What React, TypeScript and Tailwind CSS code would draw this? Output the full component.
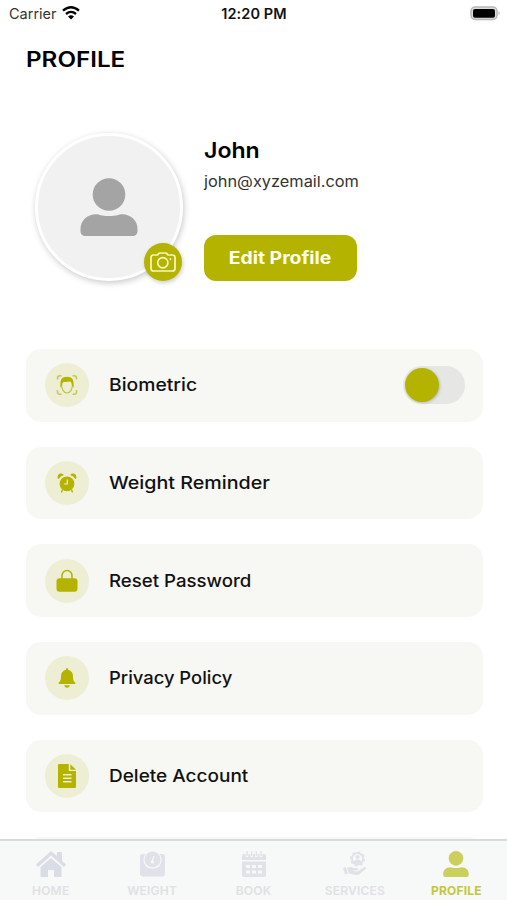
import type { ReactNode } from 'react';

const OLIVE = '#b3b300';

function Person({ className }: { className: string }) {
  return (
    <svg viewBox="0 0 58 58" className={className} fill="currentColor">
      <circle cx="29" cy="16.5" r="16.3" />
      <path d="M16 36.2c3 0 5 1.9 13 1.9s10-1.9 13-1.9c9 0 15.5 6.500 15.500 14.500v2.300c0 3-2 5-5 5h-47c-3 0-5-2-5-5v-2.300c0-8 6.500-14.500 15.500-14.500z" />
    </svg>
  );
}

function FaceIcon() {
  return (
    <svg viewBox="0 0 22 22" className="size-[22px]" fill="none">
      <path d="M1.500 5.500V4Q1.500 1.700 4 1.700H5.500M16.500 1.700H18Q20.500 1.700 20.500 4V5.500M20.500 16V18Q20.500 20.300 18 20.300H16.500M5.500 20.300H4Q1.500 20.300 1.500 18V16" stroke="#c6c65c" strokeWidth="1.500" />
      <path d="M5.300 9.500C5.300 15 8 19 11 19S16.700 15 16.700 9.500" stroke="#c2c248" strokeWidth="1.200" />
      <path d="M4.800 12C3.500 6 6 2.800 11 2.800S18.500 6 17.200 12L15.800 11.800C16 9.500 15.200 8.200 14 7.600C11 8.300 8.500 7.700 7.200 8.300C6.200 9 6.200 10.300 6.200 11.800Z" fill={OLIVE} />
      <path d="M4.700 10.500v2.800M17.300 10.500v2.800" stroke="#bebe32" strokeWidth="1.100" />
    </svg>
  );
}

function AlarmIcon() {
  return (
    <svg viewBox="0 0 22 22" className="size-[22px]" fill={OLIVE}>
      <circle cx="11" cy="11.800" r="7.400" />
      <path d="M1.700 6.200C1 3.300 3.200 1.200 5.500 1.400Q7.200 1.500 7.800 2.900Q4.300 3.800 2.700 7Q2 7 1.700 6.200ZM20.300 6.200C21 3.300 18.800 1.200 16.500 1.400Q14.800 1.500 14.200 2.900Q17.700 3.800 19.300 7Q20 7 20.300 6.200Z" />
      <path d="M6.500 17.500L5.500 20.500M15.500 17.500L16.500 20.500" stroke={OLIVE} strokeWidth="1.400" />
      <path d="M11.300 7.500V12H8" fill="none" stroke="#eeeed2" strokeWidth="1.200" />
    </svg>
  );
}

function LockIcon() {
  return (
    <svg viewBox="0 0 22 24" className="h-6 w-[22px]" fill={OLIVE}>
      <path d="M6 11V7a5 5.500 0 0 1 10 0v4" fill="none" stroke={OLIVE} strokeWidth="1.500" />
      <rect x="0.500" y="9.300" width="21" height="13.500" rx="3" />
    </svg>
  );
}

function BellIcon() {
  return (
    <svg viewBox="0 0 22 22" className="size-[22px]" fill={OLIVE}>
      <path d="M11 1Q12 1 12.200 2.700C15.500 3.500 17 6 17 9.500C17 13.500 18 14.600 19.300 15.500Q19.800 17 18.700 17H3.300Q2.200 17 2.700 15.500C4 14.600 5 13.500 5 9.500C5 6 6.500 3.500 9.800 2.700Q10 1 11 1Z" />
      <path d="M8 18.300h6Q13 20.800 11 20.800T8 18.300Z" />
    </svg>
  );
}

function DocumentIcon() {
  return (
    <svg viewBox="0 0 18 24" className="h-6 w-[18px]" fill={OLIVE}>
      <path d="M1 0H10.800V7H18V23Q18 24 17 24H1Q0 24 0 23V1Q0 0 1 0Z" />
      <path d="M12.300 0.300L18 5.800H12.300Z" />
      <path d="M5 10.800h8.500M5 14.300h8.500M5 17.800h8.500" stroke="#eeeed2" strokeWidth="1.500" />
    </svg>
  );
}

function Row({ icon, label, stretch, children }: { icon: ReactNode; label: string; stretch: string; children?: ReactNode }) {
  return (
    <div className="flex h-[72.7px] shrink-0 items-center rounded-[15px] bg-[#f7f7f3] pr-[18px] pl-[19px]">
      <div className="flex size-11 items-center justify-center rounded-full bg-[#eeeed4]">{icon}</div>
      <span className={`ml-5 origin-left whitespace-nowrap text-[17.5px] font-[460] text-[#111] ${stretch}`}>{label}</span>
      {children}
    </div>
  );
}

function Tab({ icon, label, active }: { icon: ReactNode; label: string; active?: boolean }) {
  return (
    <div className={`flex flex-1 flex-col items-center pt-[9px] ${active ? 'text-[#cccf5c]' : 'text-[#dfe2e7]'}`}>
      <div className="flex h-7 items-center justify-center">{icon}</div>
      <span className={`mt-[5px] text-[12px] leading-4 tracking-[0.2px] ${active ? 'font-bold text-[#c3c83b]' : 'font-semibold text-[#dfe1e4]'}`}>{label}</span>
    </div>
  );
}

export default function App() {
  return (
    <div className="flex h-[900px] w-[507px] flex-col overflow-hidden bg-white font-['Inter','Liberation_Sans',sans-serif] text-black">
      <header className="grid h-7 shrink-0 grid-cols-3 items-center pr-[6px] pl-[9px] text-[14.500px] leading-7">
        <div className="flex items-center gap-[5px] text-[#333]">
          <span>Carrier</span>
          <svg viewBox="0 0 18 14" className="h-[14px] w-[18px] -translate-y-px" fill="none" stroke="#000" strokeWidth="2.300">
            <path d="M1 4.700Q9-2.200 17 4.700M4 8Q9 3.800 14 8" />
            <path d="M9 13.500L6 10.500Q9 8 12 10.500Z" fill="#000" stroke="none" />
          </svg>
        </div>
        <span className="-translate-x-px text-center font-semibold tracking-[0.1px] text-[#111]">12:20 PM</span>
        <svg viewBox="0 0 31 15" className="h-[15px] w-[31px] -translate-y-px justify-self-end">
          <rect x="1" y="1" width="26" height="12.500" rx="4" fill="#ddd" stroke="#b7b7b7" strokeWidth="1.500" />
          <rect x="3" y="3" width="22" height="8.700" rx="2" />
          <path d="M28.500 5Q31 7 28.500 9.500Z" fill="#b7b7b7" />
        </svg>
      </header>
      <h1 className="mt-[17px] ml-[25.5px] h-7 w-fit shrink-0 origin-left scale-x-[1.125] text-[21.500px] leading-7 font-[560]">PROFILE</h1>

      <section className="mt-[60px] flex h-[150px] shrink-0 pl-[34.5px]">
        <div className="relative size-[148px] rounded-full border-[3px] border-white bg-[#f1f1f1] text-[#a4a4a4] shadow-[1px_2px_6px_rgba(0,0,0,0.22)]">
          <div className="flex size-full items-center justify-center">
            <Person className="size-[58px]" />
          </div>
          <div className="absolute right-[-2.500px] bottom-[-2.500px] flex size-[38px] items-center justify-center rounded-full bg-[#b3b300] shadow-[1px_2px_4px_rgba(0,0,0,0.2)]">
            <svg viewBox="0 0 26 20" className="h-5 w-[26px]" fill="none" stroke="#f8f8c0" strokeWidth="1.700">
              <path d="M3.500 3H7Q8 3 8.500 1.800Q9 1 10 1H15.500Q16.500 1 17 1.800Q17.500 3 18.500 3H22.500Q25 3 25 5.500V16.500Q25 19 22.500 19H3.500Q1 19 1 16.500V5.500Q1 3 3.500 3Z" />
              <circle cx="12.800" cy="10.800" r="5.100" />
              <circle cx="20.400" cy="7" r="0.700" fill="#f8f8d6" strokeWidth="0.700" />
            </svg>
          </div>
        </div>
        <div className="ml-[21px] flex flex-col items-start">
          <h2 className="mt-[3px] origin-left scale-x-[1.050] text-[22px] leading-7 font-semibold">John</h2>
          <p className="mt-[8px] origin-left scale-x-[1.09] text-[15px] leading-5 text-[#333]">john@xyzemail.com</p>
          <button className="mt-[43px] h-[46px] w-[153px] rounded-xl bg-[#b3b300] pt-px text-[17px] font-bold text-[#fffff0]">
            <span className="inline-block scale-x-[1.140]">Edit Profile</span>
          </button>
        </div>
      </section>

      <main className="mt-[66px] flex min-h-0 flex-1 flex-col gap-[25px] overflow-hidden pr-[24.5px] pl-[25.5px]">
        <Row icon={<FaceIcon />} label="Biometric" stretch="scale-x-[1.105]">
          <div className="ml-auto flex h-[38px] w-[62px] items-center rounded-full bg-[#e6e6e5] pl-[2px]">
            <div className="size-[34px] rounded-full bg-[#b3b300] shadow-[1px_1px_3px_rgba(0,0,0,0.2)]" />
          </div>
        </Row>
        <Row icon={<AlarmIcon />} label="Weight Reminder" stretch="scale-x-[1.125]" />
        <Row icon={<LockIcon />} label="Reset Password" stretch="scale-x-[1.065]" />
        <Row icon={<BellIcon />} label="Privacy Policy" stretch="scale-x-[1.050]" />
        <Row icon={<DocumentIcon />} label="Delete Account" stretch="scale-x-[1.085]" />
        <div className="h-[72.7px] shrink-0 rounded-[15px] bg-[#f7f7f3]" />
      </main>

      <nav className="flex h-[61px] shrink-0 border-t-2 border-[#d9d9da] bg-[#f7f8f8]">
        <Tab label="HOME" icon={
          <svg viewBox="0 0 30 26" className="h-[26px] w-[30px]" fill="#dadde5">
            <path d="M15 0L21 5V1H26V10L30 13.500L28 16L15 4.500L2 16L0 13.500Z" />
            <path d="M15 7L25.500 16V26H18V19H12V26H4.500V16Z" />
          </svg>} />
        <Tab label="WEIGHT" icon={
          <svg viewBox="0 0 26 26" className="h-[26px] w-[25px]" fill="#dfe2e8">
            <path d="M3 2.500H23Q26 2.500 26 5.500V23Q26 26 23 26H3Q0 26 0 23V5.500Q0 2.500 3 2.500Z" />
            <circle cx="13" cy="8.500" r="9.500" fill="#f7f8f8" />
            <circle cx="13" cy="8.300" r="8.300" />
            <path d="M14.500 4.800L12.700 10" fill="none" stroke="#f7f8f8" strokeWidth="1.300" />
            <circle cx="12.800" cy="10.800" r="1.700" fill="#f7f8f8" />
          </svg>} />
        <Tab label="BOOK" icon={
          <svg viewBox="0 0 24 26" className="h-[26px] w-6" fill="currentColor">
            <path d="M2 3H22Q24 3 24 5V9H0V5Q0 3 2 3ZM0 10.500H24V24Q24 26 22 26H2Q0 26 0 24Z" />
            <path d="M5 0V6M9.700 0V6M14.300 0V6M19 0V6" stroke="#f7f8f8" strokeWidth="2.600" />
            <path d="M5 0V5M9.700 0V5M14.300 0V5M19 0V5" stroke="currentColor" strokeWidth="1.300" />
            <path d="M4 14h4v3H4zM10 14h4v3h-4zM16 14h4v3h-4zM4 19.500h4v3H4zM10 19.500h4v3h-4zM16 19.500h4v3h-4z" fill="#f7f8f8" />
          </svg>} />
        <Tab label="SERVICES" icon={
          <svg viewBox="0 0 24 26" className="h-[26px] w-6" fill="currentColor">
            <circle cx="14.500" cy="7.800" r="6.500" />
            <circle cx="14.500" cy="7.800" r="6.800" fill="none" stroke="currentColor" strokeWidth="1.500" strokeDasharray="2.670 2.670" />
            <circle cx="14.500" cy="7.800" r="4.700" fill="#f7f8f8" />
            <circle cx="14.500" cy="6" r="2.100" />
            <path d="M10.700 11Q11 8.500 14.500 8.500T18.300 11Q14.500 14 10.700 11ZM0 17L2.700 16L5 22.500L2 23.500ZM4 17.500Q7 15 10 17H14Q16 18.500 13.500 19.500H10.500V20.300H15L20.500 16.500Q22.500 15.500 23 16.700Q23.300 17.500 21.500 19L16 23.500Q15 24.300 13 24L6 22.500Z" />
          </svg>} />
        <Tab label="PROFILE" active icon={<Person className="h-[26px] w-[26px]" />} />
      </nav>
    </div>
  );
}
